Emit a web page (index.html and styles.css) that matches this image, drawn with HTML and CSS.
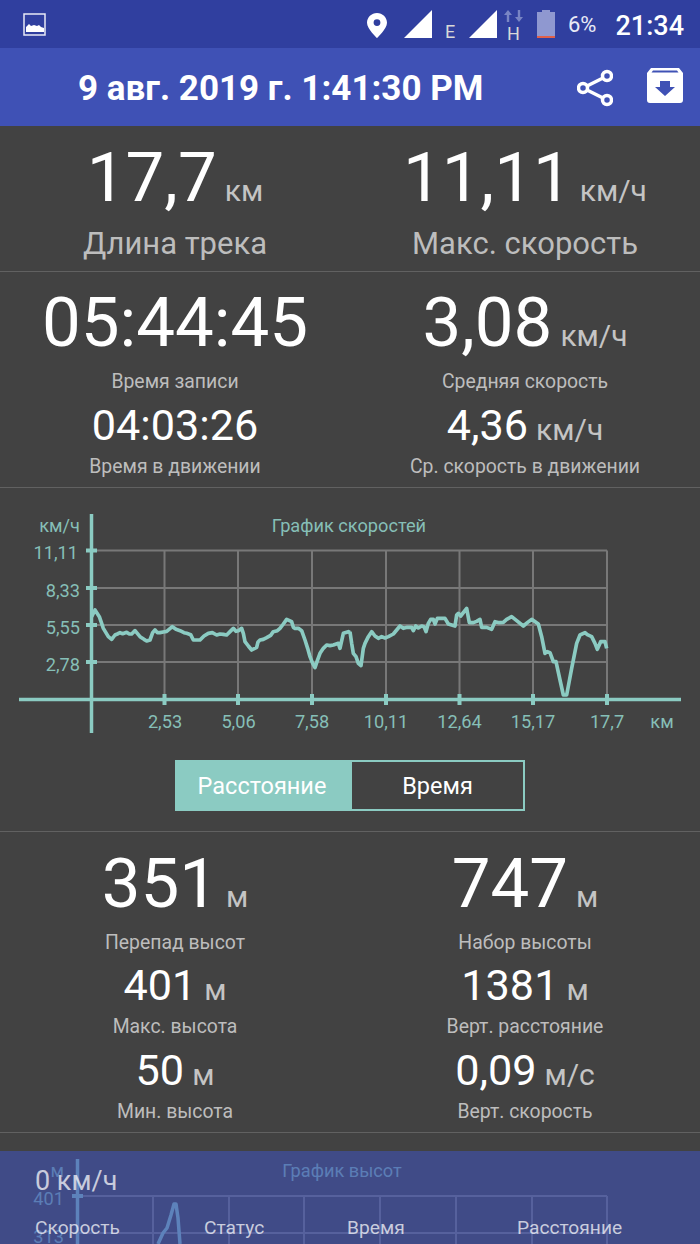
FILE: index.html
```html
<!DOCTYPE html>
<html lang="ru">
<head>
<meta charset="utf-8">
<title>Трек</title>
<link rel="stylesheet" href="styles.css">
</head>
<body>
<div class="screen">
  <div class="statusbar">
    <svg class="ic-image" viewBox="0 0 23 23"><path d="M1 1h21v21H1z" fill="none" stroke="#e8eaf6" stroke-width="1.5"/><path d="M3 19v-5l3-3 2 2 3-1 3 1 2-1 2 2 3 1v4z" fill="#fff"/></svg>
    <span class="spacer"></span>
    <svg class="ic-pin" viewBox="0 0 20 25"><path fill-rule="evenodd" d="M10 0C4.500 0 0 4.300 0 9.700 0 16 10 25 10 25s10-9 10-15.300C20 4.300 15.500 0 10 0zm0 13a3.400 3.400 0 1 1 0-6.800 3.400 3.400 0 0 1 0 6.800z" fill="#fff"/></svg>
    <svg class="ic-signal" viewBox="0 0 28 28"><path d="M0 28 28 0v28z" fill="#fff"/></svg>
    <span class="net net-e">E</span>
    <svg class="ic-signal ic-signal2" viewBox="0 0 28 28"><path d="M0 28 28 0v28z" fill="#fff"/></svg>
    <span class="net-stack">
      <svg class="ic-arrows" viewBox="0 0 19 12"><path d="M4 0 0 5h2.800v7h2.400V5H8zM15 12l4-5h-2.800V0h-2.400v7H11z" fill="#7985c4"/></svg>
      <span class="net">H</span>
    </span>
    <svg class="ic-batt" viewBox="0 0 18 28"><path d="M5 0h8v2h5v26H0V2h5z" fill="#8f98d0"/><path d="M0 26h18v2H0z" fill="#e0604a"/></svg>
    <span class="pct">6%</span>
    <span class="clock">21:34</span>
  </div>

  <header class="appbar">
    <h1 class="title">9 авг. 2019 г. 1:41:30 PM</h1>
    <svg class="ic-share" viewBox="0 0 36 38"><g fill="none" stroke="#fff" stroke-width="3.500"><circle cx="30" cy="7" r="4.500"/><circle cx="30" cy="31" r="4.500"/><circle cx="6" cy="19" r="4.500"/><path d="M10 17 26 9M10 21l16 8"/></g></svg>
    <svg class="ic-archive" viewBox="0 0 36 35"><path fill-rule="evenodd" d="M4 0h28l4 5v27a3 3 0 0 1-3 3H3a3 3 0 0 1-3-3V5zm2 2.500L4.500 4.500h27L30 2.500zM13 13v6H8l10 9 10-9h-5v-6z" fill="#fff"/></svg>
  </header>

  <section class="row row-top">
    <div class="cell">
      <div class="val-xl">17,7<span class="unit">км</span></div>
      <div class="label-lg">Длина трека</div>
    </div>
    <div class="cell">
      <div class="val-xl">11,11<span class="unit">км/ч</span></div>
      <div class="label-lg">Макс. скорость</div>
    </div>
  </section>

  <section class="row row-time">
    <div class="cell">
      <div class="val-xl">05:44:45</div>
      <div class="label">Время записи</div>
      <div class="val-md">04:03:26</div>
      <div class="label">Время в движении</div>
    </div>
    <div class="cell">
      <div class="val-xl">3,08<span class="unit">км/ч</span></div>
      <div class="label">Средняя скорость</div>
      <div class="val-md">4,36<span class="unit">км/ч</span></div>
      <div class="label">Ср. скорость в движении</div>
    </div>
  </section>

  <section class="chart-block">
    <svg class="chart" viewBox="0 0 700 250">
      <g class="grid">
        <path d="M91 62.500H607M91 100H607M91 137H607M91 174H607"/>
        <path d="M164.500 62.500V211M238 62.500V211M312 62.500V211M386 62.500V211M459.500 62.500V211M533 62.500V211M607 62.500V211"/>
      </g>
      <g class="axis">
        <path d="M91.500 26V245M19 211.500H681"/>
        <path class="tick" d="M86 62.500h11M86 100h11M86 137h11M86 174h11M164.500 206v11M238 206v11M312 206v11M386 206v11M459.500 206v11M533 206v11M607 206v11"/>
      </g>
      <g transform="translate(0 12) scale(.33333)">
        <polyline class="curve" points="275,350 285,330 298,350 310,385 325,410 335,418 345,405 352,402 360,398 368,401 380,397 388,402 395,402 405,392 420,410 432,418 440,423 450,420 458,398 465,390 472,398 480,398 490,396 500,394 517,380 528,388 540,392 552,398 560,400 572,404 580,420 600,420 612,408 625,400 637,398 650,405 660,402 670,403 680,405 690,395 700,385 708,394 715,392 725,385 730,400 735,425 745,438 755,450 770,442 774,426 780,420 790,418 800,413 812,406 820,395 832,392 840,385 850,372 860,358 875,365 880,382 885,385 895,385 905,392 915,420 923,445 930,470 938,490 945,503 952,482 960,460 970,445 980,435 990,437 1000,435 1015,430 1020,445 1030,400 1045,395 1050,398"/>
      </g>
      <g transform="translate(350 12) scale(.33333)">
        <polyline class="curve" points="0,395 5,430 10,460 18,470 25,490 33,497 40,445 45,430 55,410 65,395 75,408 85,415 95,410 105,414 115,410 130,402 150,378 160,385 172,382 185,382 190,392 197,378 205,384 215,378 222,380 228,395 235,370 242,358 250,358 255,372 262,355 285,355 295,372 315,378 320,345 325,340 332,348 350,325 358,368 370,368 380,364 390,358 395,382 410,382 425,388 435,365 448,368 460,367 470,358 485,350 500,362 520,378 532,368 545,358 565,372 575,410 585,460 592,455 600,458 610,485 618,485 630,540 640,585 650,585 665,505 680,430 690,405 705,398 712,404 725,410 735,430 742,448 752,425 765,425 770,445"/>
      </g>
      <text class="txt end" x="80" y="44">км/ч</text>
      <text class="txt end" x="78" y="71">11,11</text>
      <text class="txt end" x="80" y="109">8,33</text>
      <text class="txt end" x="80" y="146">5,55</text>
      <text class="txt end" x="80" y="183">2,78</text>
      <text class="txt mid" x="349" y="44">График скоростей</text>
      <text class="txt mid" x="165" y="240">2,53</text>
      <text class="txt mid" x="238.500" y="240">5,06</text>
      <text class="txt mid" x="312" y="240">7,58</text>
      <text class="txt mid" x="386" y="240">10,11</text>
      <text class="txt mid" x="459.500" y="240">12,64</text>
      <text class="txt mid" x="533" y="240">15,17</text>
      <text class="txt mid" x="607" y="240">17,7</text>
      <text class="txt mid" x="662" y="240">км</text>
    </svg>
    <div class="toggle">
      <span class="seg seg-on">Расстояние</span>
      <span class="seg">Время</span>
    </div>
  </section>

  <section class="row row-alt">
    <div class="cell">
      <div class="val-xl">351<span class="unit">м</span></div>
      <div class="label">Перепад высот</div>
      <div class="val-md">401<span class="unit">м</span></div>
      <div class="label">Макс. высота</div>
      <div class="val-md">50<span class="unit">м</span></div>
      <div class="label">Мин. высота</div>
    </div>
    <div class="cell">
      <div class="val-xl">747<span class="unit">м</span></div>
      <div class="label">Набор высоты</div>
      <div class="val-md">1381<span class="unit">м</span></div>
      <div class="label">Верт. расстояние</div>
      <div class="val-md">0,09<span class="unit">м/с</span></div>
      <div class="label">Верт. скорость</div>
    </div>
  </section>

  <svg class="chart chart-low" viewBox="0 0 700 111">
    <g class="grid">
      <path d="M77 63H607M77 100H607"/>
      <path d="M153 63V111M229 63V111M304 63V111M380 63V111M456 63V111M532 63V111M607 63V111"/>
    </g>
    <g class="axis">
      <path d="M77.500 26V111"/>
      <path class="tick" d="M72 63h11"/>
    </g>
    <polyline class="curve" points="158,111 163,100 167,95 171,82 174,71 176,71 178,85 180,111"/>
    <text class="txt end" x="64" y="44">м</text>
    <text class="txt end" x="64" y="72">401</text>
    <text class="txt end" x="64" y="110">313</text>
    <text class="txt mid" x="342" y="44">График высот</text>
  </svg>

  <footer class="panel">
    <div class="panel-value">0 км/ч</div>
    <div class="panel-labels">
      <span>Скорость</span>
      <span>Статус</span>
      <span>Время</span>
      <span>Расстояние</span>
    </div>
  </footer>
</div>
</body>
</html>
```
FILE: styles.css
```css
* { box-sizing: border-box; }
html, body { margin: 0; padding: 0; background: #424242; }
.screen {
  position: relative;
  width: 700px;
  height: 1244px;
  overflow: hidden;
  background: #424242;
  font-family: Roboto, "Noto Sans", sans-serif;
  color: #fff;
}
.statusbar {
  display: flex;
  align-items: flex-start;
  height: 48px;
  padding: 10px 16px 0 23px;
  background: #303f9f;
}
.spacer { flex: 1; }
.ic-image { width: 23px; height: 23px; margin-top: 3px; }
.ic-pin { width: 20px; height: 25px; margin-top: 3px; margin-right: 17px; }
.ic-signal { width: 28px; height: 28px; }
.ic-signal2 { margin-left: 14px; }
.net { font-size: 18px; line-height: 18px; color: #d8d8d8; }
.net-e { width: 10px; margin: 13px 0 0 13px; font-size: 18px; }
.net-stack { display: flex; flex-direction: column; align-items: center; width: 19px; margin-left: 7px; }
.ic-arrows { width: 19px; height: 12px; margin-bottom: 3px; }
.ic-batt { width: 18px; height: 28px; margin-left: 14px; }
.pct { margin-left: 13px; font-size: 22px; line-height: 30px; color: #e8eaf6; }
.clock { margin-left: 19px; font-size: 27px; line-height: 32px; font-weight: 500; }
.appbar {
  display: flex;
  align-items: center;
  height: 78px;
  padding: 0 17px 0 78px;
  background: #3f51b5;
}
.title { flex: 1; margin: 4px 0 0; font-size: 35px; line-height: 40px; font-weight: 700; white-space: nowrap; }
.ic-share { width: 36px; height: 38px; margin-right: 34px; margin-top: 1px; }
.ic-archive { width: 36px; height: 35px; margin-top: -3px; }
.row {
  display: grid;
  grid-template-columns: 350px 350px;
  border-bottom: 1px solid #616161;
}
.cell { text-align: center; }
.row-top { height: 146px; padding-top: 12px; }
.row-time { height: 216px; padding-top: 11px; }
.row-alt { height: 301px; padding-top: 12px; }
.val-xl { height: 80px; font-size: 69px; line-height: 80px; }
.val-md { height: 52px; margin-top: 6px; font-size: 43.200px; line-height: 52px; }
.unit { margin-left: 8px; font-size: 30px; color: #c4c4c4; }
.label-lg { margin-top: 8px; font-size: 31px; line-height: 36px; color: #bdbdbd; }
.label { margin-top: 7px; font-size: 19.400px; line-height: 24px; color: #bdbdbd; }
.val-md + .label { margin-top: 3px; }
.row-alt .val-xl + .label { margin-bottom: -1px; }
.chart-block { display: flex; flex-direction: column; align-items: center; height: 344px; border-bottom: 1px solid #616161; }
.chart { display: block; width: 700px; height: 250px; flex: none; }
.chart-low { height: 111px; }
.grid path { fill: none; stroke: #787878; stroke-width: 2; }
.axis path { fill: none; stroke: #8bcbc2; stroke-width: 3.500; }
.axis .tick { stroke-width: 4; }
.curve { fill: none; stroke: #8bcbc2; stroke-width: 11; stroke-linejoin: round; }
.chart-low .curve { stroke-width: 3.500; }
.txt { fill: #86bfb7; font-size: 18.200px; font-family: Roboto, sans-serif; }
.end { text-anchor: end; }
.mid { text-anchor: middle; }
.toggle {
  display: flex;
  width: 350px;
  height: 51px;
  margin-top: 22px;
  border: 2px solid #8bcbc2;
}
.seg { display: flex; align-items: center; justify-content: center; font-size: 23.500px; flex: 1; }
.seg-on { flex: none; width: 175px; padding-right: 5px; background: #8bcbc2; }
.panel {
  position: absolute;
  left: 0;
  right: 0;
  bottom: 0;
  height: 93px;
  padding: 12px 0 0 35px;
  background: rgba(63, 81, 181, .6);
  color: rgba(255, 255, 255, .72);
}
.panel-value { font-size: 27px; line-height: 36px; }
.panel-labels {
  display: grid;
  grid-template-columns: 169px 143px 170px auto;
  margin-top: 17px;
  font-size: 19.200px;
  line-height: 24px;
}
```
